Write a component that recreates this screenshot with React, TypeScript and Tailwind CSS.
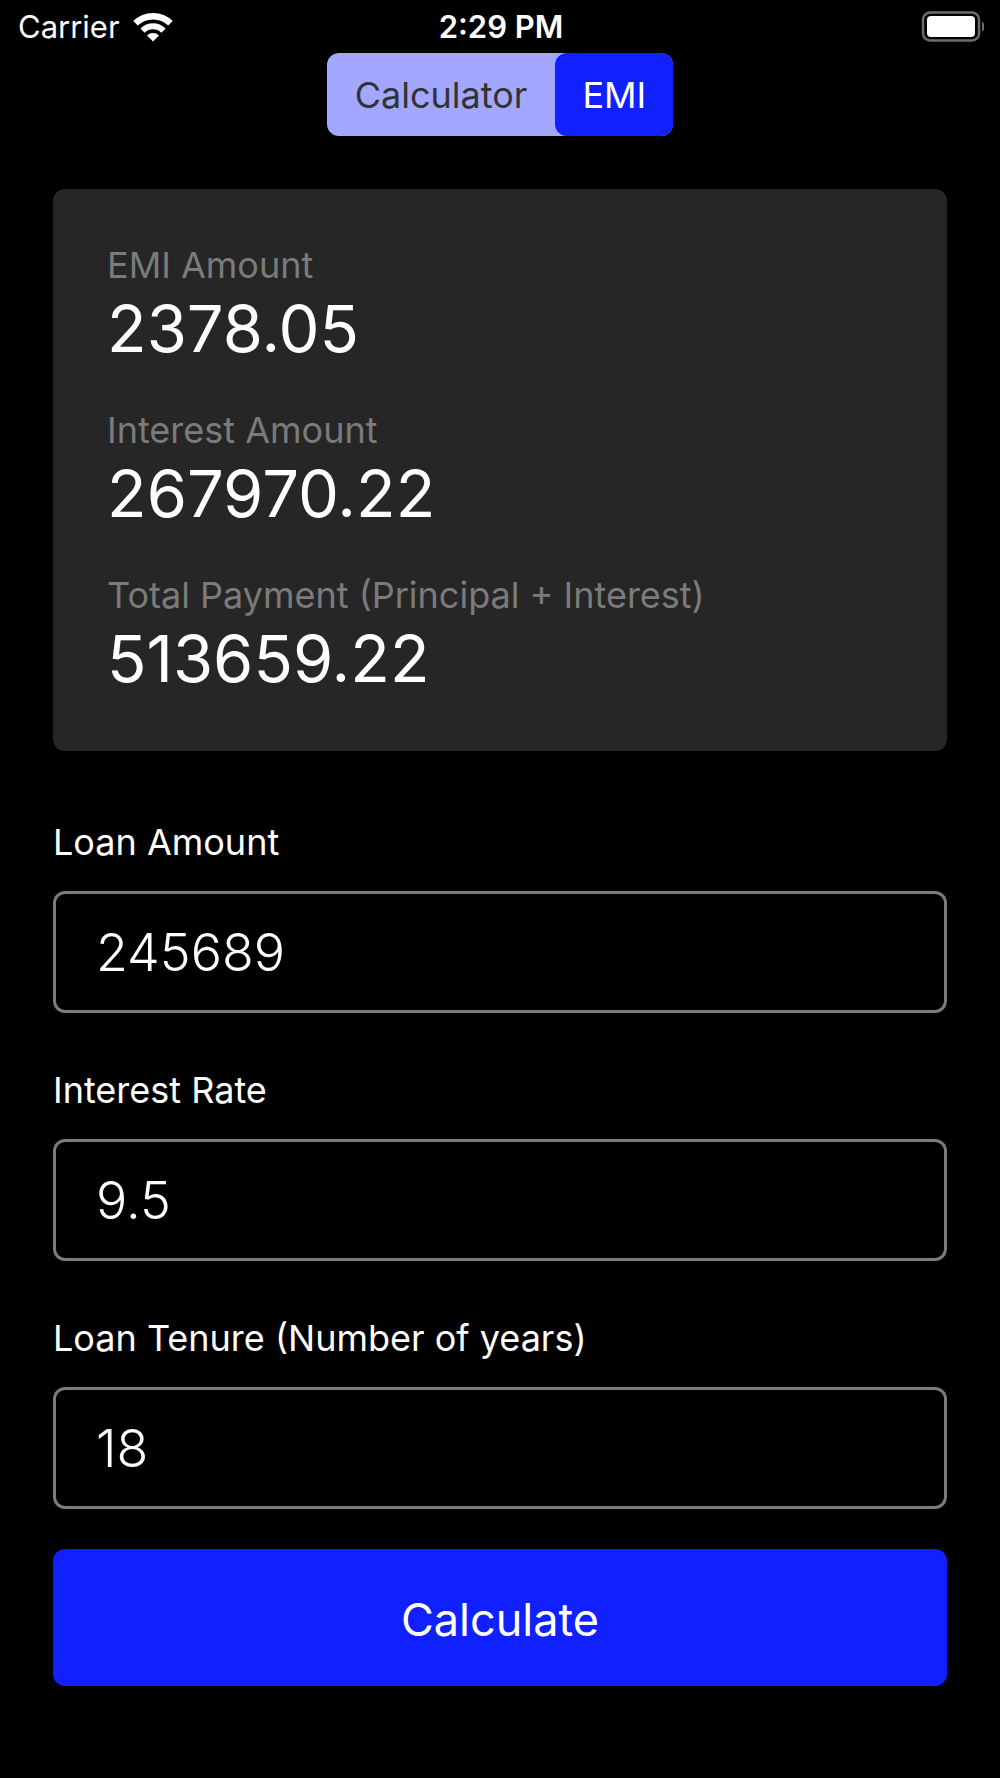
import { useState } from "react";

const results = [
  { label: "EMI Amount", value: "2378.05" },
  { label: "Interest Amount", value: "267970.22" },
  { label: "Total Payment (Principal + Interest)", value: "513659.22" },
];

const fields = [
  { id: "amount", label: "Loan Amount", value: "245689" },
  { id: "rate", label: "Interest Rate", value: "9.5" },
  { id: "tenure", label: "Loan Tenure (Number of years)", value: "18" },
];

function StatusBar() {
  return (
    <header className="grid h-[53px] grid-cols-3 items-center pr-4 pl-[18px] text-[31px] leading-9">
      <div className="flex items-center gap-[13px]">
        <span>Carrier</span>
        <svg width="40" height="30" viewBox="0 0 40 30" fill="none" stroke="white" aria-label="Wi-Fi">
          <path d="M2.500 11.300a25 25 0 0 1 35 0" strokeWidth="6.500" />
          <path d="M9.500 18.600a15 15 0 0 1 21 0" strokeWidth="6" />
          <path d="M20 29.500l-6-6a8.500 8.500 0 0 1 12 0z" fill="white" stroke="none" />
        </svg>
      </div>
      <time className="text-center font-semibold">2:29 PM</time>
      <svg className="justify-self-end" width="64" height="32" viewBox="0 0 64 32" aria-label="Battery">
        <rect x="3" y="1.500" width="56" height="28" rx="7" fill="none" stroke="#6c6c6c" strokeWidth="2.500" />
        <rect x="7" y="5" width="48" height="21" rx="4" fill="white" />
        <path d="M62 10.500q2.500 1.500 2.500 5t-2.500 5z" fill="#6c6c6c" />
      </svg>
    </header>
  );
}

export default function App() {
  const [values, setValues] = useState(fields.map((f) => f.value));
  return (
    <div className="min-h-screen bg-black font-['Inter',sans-serif] text-white">
      <StatusBar />
      <nav className="mx-auto flex h-[83px] w-fit rounded-xl bg-[#a3a7ff] text-4xl">
        <button className="px-7 text-[#333333]">Calculator</button>
        <button className="rounded-xl bg-[#1020ff] px-[27px]">EMI</button>
      </nav>
      <main className="px-[53px] pt-[53px]">
        <section className="flex flex-col gap-[37px] rounded-xl bg-[#262626] px-[54px] pt-[54px] pb-[50px]">
          {results.map((r) => (
            <div key={r.label}>
              <p className="text-4xl leading-[44px] text-[#7b7b7b]">{r.label}</p>
              <p className="text-[65px] leading-[84px]">{r.value}</p>
            </div>
          ))}
        </section>
        <form className="pt-[68px]" onSubmit={(e) => e.preventDefault()}>
          <div className="flex flex-col gap-[54px]">
            {fields.map((f, i) => (
              <div key={f.id}>
                <label htmlFor={f.id} className="block text-4xl leading-[46px]">{f.label}</label>
                <input
                  id={f.id}
                  value={values[i]}
                  onChange={(e) => setValues(values.map((v, n) => (n === i ? e.target.value : v)))}
                  className="mt-[26px] block h-[122px] w-full rounded-xl border-3 border-[#7b7b7b] bg-black px-10 text-[52px] font-light outline-none"
                />
              </div>
            ))}
          </div>
          <button className="mt-10 h-[137px] w-full rounded-xl bg-[#1020ff] pt-1 text-[45px]">Calculate</button>
        </form>
      </main>
    </div>
  );
}
